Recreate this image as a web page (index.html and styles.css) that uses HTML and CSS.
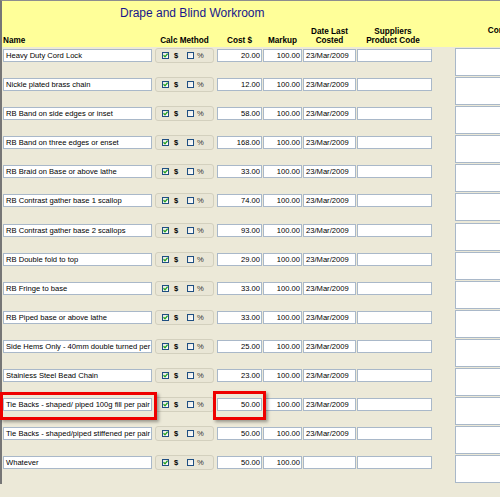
FILE: index.html
```html
<!DOCTYPE html>
<html>
<head>
<meta charset="utf-8">
<link rel="stylesheet" href="styles.css">
</head>
<body>
<div class="form">
  <div class="header">
    <div class="title">Drape and Blind Workroom</div>
    <div class="colheads">
      <div class="c-name h-left">Name</div>
      <div class="c-calc">Calc Method</div>
      <div class="c-cost">Cost $</div>
      <div class="c-mark">Markup</div>
      <div class="c-date">Date Last<br>Costed</div>
      <div class="c-sup">Suppliers<br>Product Code</div>
      <div class="c-com h-top">Comments</div>
    </div>
  </div>
  <div class="rows" id="rows"></div>
</div>
<script src="app.js"></script>
</body>
</html>
```

FILE: app.js
```js
const data = [
  ["Heavy Duty Cord Lock", "20.00", "23/Mar/2009"],
  ["Nickle plated brass chain", "12.00", "23/Mar/2009"],
  ["RB Band on side edges or inset", "58.00", "23/Mar/2009"],
  ["RB Band on three edges or enset", "168.00", "23/Mar/2009"],
  ["RB Braid on Base or above lathe", "33.00", "23/Mar/2009"],
  ["RB Contrast gather base 1 scallop", "74.00", "23/Mar/2009"],
  ["RB Contrast gather base 2 scallops", "93.00", "23/Mar/2009"],
  ["RB Double fold to top", "29.00", "23/Mar/2009"],
  ["RB Fringe to base", "33.00", "23/Mar/2009"],
  ["RB Piped base or above lathe", "33.00", "23/Mar/2009"],
  ["Side Hems Only - 40mm double turned per hem", "25.00", "23/Mar/2009"],
  ["Stainless Steel Bead Chain", "23.00", "23/Mar/2009"],
  ["Tie Backs - shaped/ piped 100g fill per pair", "50.00", "23/Mar/2009"],
  ["Tie Backs - shaped/piped stiffened per pair", "50.00", "23/Mar/2009"],
  ["Whatever", "50.00", ""]
];
const check = '<span class="cb"><svg width="5" height="5" viewBox="0 0 5 5"><path d="M0.5 2.3 L2 3.8 L4.6 0.6" fill="none" stroke="#1fa01f" stroke-width="1.3"/></svg></span>';
const rows = document.getElementById("rows");
data.forEach((d, i) => {
  const r = document.createElement("div");
  r.className = "row";
  let extra = "";
  if (i === 12) extra = '<div class="hl hl-name"></div><div class="hl hl-cost"></div>';
  r.innerHTML =
    '<div class="c-name fld">' + d[0] + '</div>' +
    '<div class="c-calc calc">' + check + '<span class="dol">$</span><span class="cb"></span><span class="pct">%</span></div>' +
    '<div class="c-cost fld num">' + d[1] + '</div>' +
    '<div class="c-mark fld num">100.00</div>' +
    '<div class="c-date fld">' + d[2] + '</div>' +
    '<div class="c-sup fld"></div>' +
    '<div class="c-com memo"></div>' + extra;
  rows.appendChild(r);
});
```

FILE: styles.css
```css
html, body {
  margin: 0;
  padding: 0;
}
body {
  width: 500px;
  height: 497px;
  overflow: hidden;
  background: #ece9d8;
  font-family: "Liberation Sans", Arial, sans-serif;
  color: #000;
}
.form {
  width: 620px;
  height: 484px;
  box-sizing: border-box;
  border-top: 1px solid #8e8e8e;
  border-left: 2px solid #767676;
  padding-left: 1px;
}
.header {
  background: #ffff99;
  height: 46px;
  margin-left: -1px;
  padding-left: 1px;
  display: flex;
  flex-direction: column;
  box-sizing: border-box;
  padding-bottom: 2px;
}
.title {
  font-size: 12px;
  line-height: 14px;
  color: #16168c;
  padding-top: 5px;
  padding-left: 117px;
}
.colheads {
  margin-top: auto;
  display: flex;
  align-items: flex-end;
  font-size: 8.2px;
  font-weight: bold;
  line-height: 9px;
  text-align: center;
}
.h-left { text-align: left; }
.h-top { align-self: flex-start; margin-top: -1px; }

.c-name { width: 149px; flex: none; }
.c-calc { width: 59px; margin-left: 3px; flex: none; }
.c-cost { width: 45px; margin-left: 3px; flex: none; }
.c-mark { width: 39px; margin-left: 1px; flex: none; }
.c-date { width: 53px; margin-left: 1px; flex: none; }
.c-sup { width: 75px; margin-left: 1px; flex: none; }
.c-com { width: 108px; margin-left: 23px; flex: none; }

.colheads .c-sup { margin-left: -2px; width: 78px; }

.row {
  position: relative;
  display: flex;
  align-items: flex-start;
  height: 29.1px;
}
.fld {
  box-sizing: border-box;
  height: 13px;
  margin-top: 2px;
  background: #fff;
  border: 1px solid #a9b8c9;
  font-size: 7.6px;
  line-height: 11px;
  padding: 0 1px 0 2px;
  white-space: nowrap;
  overflow: hidden;
}
.num { text-align: right; padding-right: 1px; }
.calc {
  box-sizing: border-box;
  height: 15px;
  margin-top: 1px;
  border: 1px solid #d3d0be;
  border-radius: 3px;
  background: #e9e6d6;
  display: flex;
  align-items: center;
  padding-left: 6px;
  font-size: 7.6px;
}
.cb {
  box-sizing: border-box;
  width: 7px;
  height: 7px;
  border: 1px solid #1f4f82;
  background: linear-gradient(135deg, #e6e6e0, #ffffff);
  display: flex;
  align-items: center;
  justify-content: center;
  flex: none;
}
.cb svg { display: block; }
.dol { margin-left: 5px; font-weight: bold; width: 4px; }
.dol + .cb { margin-left: 9px; }
.pct { margin-left: 3px; color: #333; }
.memo {
  box-sizing: border-box;
  height: 28px;
  margin-top: 1px;
  background: #fff;
  border: 1px solid #a9b8c9;
}
.hl {
  position: absolute;
  border: 3px solid #ee0000;
  box-sizing: border-box;
  box-shadow: 2px 2px 3px rgba(0, 0, 0, 0.35);
}
.hl-name { left: -3px; top: -4px; width: 157px; height: 28px; }
.hl-cost { left: 210px; top: -5px; width: 53px; height: 29px; }
```
